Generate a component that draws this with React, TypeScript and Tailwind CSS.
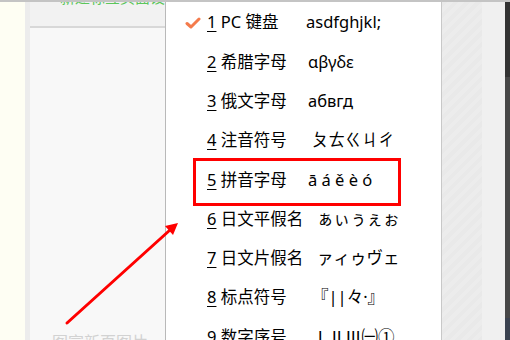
const rows = [
  { n: "1", label: "PC 键盘", value: "asdfghjkl;", shift: "ml-[-2px]", checked: true },
  { n: "2", label: "希腊字母", value: "αβγδε", shift: "ml-0" },
  { n: "3", label: "俄文字母", value: "абвгд", shift: "ml-0" },
  { n: "4", label: "注音符号", value: "ㄆㄊㄍㄐㄔ", shift: "ml-[4px]" },
  { n: "5", label: "拼音字母", value: "ā á ě è ó", shift: "ml-0" },
  { n: "6", label: "日文平假名", value: "ぁぃぅぇぉ", shift: "ml-[9px]" },
  { n: "7", label: "日文片假名", value: "ァィゥヴェ", shift: "ml-[9px]" },
  { n: "8", label: "标点符号", value: "『||々·』", shift: "ml-[4px]" },
  { n: "9", label: "数字序号", value: "ⅠⅡⅢ㈠①", shift: "ml-[4px]" },
];

const App = () => {
  return (
    <div
      className="relative w-[510px] h-[340px] overflow-hidden bg-white border-t-2 border-[#c4c4c4] flex"
      style={{ fontFamily: '"Noto Sans", "Noto Sans CJK SC", sans-serif' }}
    >
      {/* cream strip */}
      <div className="w-[25px] h-full bg-[#fefef3]" />

      {/* side panel */}
      <div className="w-[141px] h-full flex flex-col bg-[#f8f8f8] border-l-[5px] border-[#ececec] border-r border-r-[#b9b9b9]">
        <div className="h-[26px] bg-[#f2f2f2] border-b-2 border-[#d8d8d8] overflow-hidden">
          <div className="mt-[-14px] ml-[30px] text-[15px] leading-[18px] text-[#5cc65c] whitespace-nowrap">
            新建标签页面设置
          </div>
        </div>
        <div className="flex-1 flex flex-col justify-end overflow-hidden">
          <div className="mb-[-12px] ml-[22px] text-[16px] leading-[20px] text-[#d2d2d2] whitespace-nowrap">
            图宣新页图片
          </div>
        </div>
      </div>

      {/* menu */}
      <div className="w-[276px] h-full bg-white border-r border-[#c8c8c8] pt-[1px] text-[16.5px] text-black">
        {rows.map((r) => (
          <div key={r.n} className="h-[39.3px] flex items-center whitespace-nowrap">
            <div className="w-[41px] flex justify-center pl-[12px]">
              {r.checked && (
                <svg width="16" height="12" viewBox="0 0 16 12">
                  <path d="M2 6.5 L6 10 L14 2" fill="none" stroke="#f47b4c" strokeWidth="3" strokeLinecap="round" strokeLinejoin="round" />
                </svg>
              )}
            </div>
            <div className="w-[101px] leading-none">
              <span className="underline underline-offset-[3px]">{r.n}</span> {r.label}
            </div>
            <div className={`leading-none ${r.shift}`}>{r.value}</div>
          </div>
        ))}
      </div>

      {/* striped area */}
      <div
        className="w-[40px] h-full bg-[#ebebeb]"
        style={{
          backgroundImage:
            "repeating-linear-gradient(135deg, #e9e9e9 0px, #e9e9e9 4px, #ececec 4px, #ececec 8px)",
        }}
      />
      <div className="w-[23px] h-full bg-[#f0f0f0]" />
      <div className="w-[5px] h-full flex flex-col">
        <div className="h-[75px] bg-[#333333]" />
        <div className="flex-1 bg-[#474747]" />
        <div className="h-[22px] bg-[#3b4250]" />
      </div>

      {/* annotations */}
      <div className="absolute left-[193px] top-[156px] w-[208px] h-[48px] border-[3px] border-[#ff0000]" />
      <svg className="absolute left-0 top-0" width="510" height="340" viewBox="0 0 510 340">
        <line x1="67" y1="321" x2="170" y2="228" stroke="#ff0000" strokeWidth="3" strokeLinecap="round" />
        <polygon points="178,221 165,224 173,233" fill="#ff0000" />
      </svg>
    </div>
  );
};

export default App;
